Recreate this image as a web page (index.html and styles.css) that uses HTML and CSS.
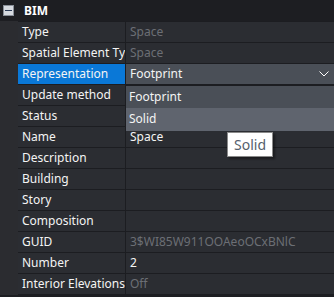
FILE: index.html
```html
<!DOCTYPE html>
<html lang="en">
<head>
    <meta charset="UTF-8">
    <title>Properties</title>
    <link rel="stylesheet" href="styles.css">
</head>
<body>
    <div class="panel">
        <div class="header">
            <span class="toggle"><span class="minus"></span></span>
            <span class="title">BIM</span>
        </div>
        <div class="rows">
            <div class="row"><div class="label">Type</div><div class="value muted">Space</div></div>
            <div class="row"><div class="label">Spatial Element Type</div><div class="value muted">Space</div></div>
            <div class="row selected">
                <div class="label">Representation</div>
                <div class="value select">
                    <span>Footprint</span>
                    <svg class="chevron" width="10" height="6" viewBox="0 0 10 6"><path d="M0.5 0.5 L5 5 L9.5 0.5" fill="none" stroke="#fff" stroke-width="1"/></svg>
                </div>
                <!-- open list of the representation select -->
                <div class="dropdown">
                    <div class="option">Footprint</div>
                    <div class="option hover">Solid</div>
                </div>
                <div class="tooltip">Solid</div>
            </div>
            <div class="row"><div class="label">Update method</div><div class="value"></div></div>
            <div class="row"><div class="label">Status</div><div class="value"></div></div>
            <div class="row"><div class="label">Name</div><div class="value">Space</div></div>
            <div class="row"><div class="label">Description</div><div class="value"></div></div>
            <div class="row"><div class="label">Building</div><div class="value"></div></div>
            <div class="row"><div class="label">Story</div><div class="value"></div></div>
            <div class="row"><div class="label">Composition</div><div class="value"></div></div>
            <div class="row"><div class="label">GUID</div><div class="value muted">3$WI85W911OOAeoOCxBNlC</div></div>
            <div class="row"><div class="label">Number</div><div class="value">2</div></div>
            <div class="row"><div class="label">Interior Elevations</div><div class="value muted">Off</div></div>
        </div>
    </div>
</body>
</html>
```

FILE: styles.css
```css
body {
    margin: 0;
    background-color: #1d1e22;
    font-family: "Noto Sans", "DejaVu Sans", sans-serif;
    font-size: 12px;
    color: #f4f4f4;
}
.panel {
    width: 334px;
    height: 297px;
    overflow: hidden;
}
.header {
    height: 21px;
    display: flex;
    align-items: center;
    background-color: #1d1e22;
}
.toggle {
    width: 9px;
    height: 9px;
    margin-left: 3px;
    margin-right: 10px;
    border: 1px solid #8a9099;
    background-color: #d6dae0;
    display: flex;
    align-items: center;
    justify-content: center;
}
.minus {
    width: 7px;
    height: 1px;
    background-color: #2a3a55;
}
.title {
    font-weight: bold;
    color: #ffffff;
}
.rows {
    padding-left: 18px;
    background-color: #2b2c30;
}
.row {
    position: relative;
    display: flex;
    height: 20px;
    border-top: 1px solid #1c1d21;
    background-color: #2b2d32;
}
.row:last-child {
    border-bottom: 1px solid #1c1d21;
}
.label {
    width: 103px;
    padding-left: 4px;
    border-right: 1px solid #1c1d21;
    line-height: 20px;
    white-space: nowrap;
    overflow: hidden;
}
.value {
    flex: 1;
    padding-left: 4px;
    line-height: 20px;
    white-space: nowrap;
}
.muted {
    color: #6c6f75;
}
.selected .label {
    background-color: #0a78d7;
}
.select {
    display: flex;
    align-items: center;
    justify-content: space-between;
    padding-right: 5px;
    background-color: #4a4f57;
}
.dropdown {
    position: absolute;
    left: 108px;
    top: 21px;
    right: 0;
    border-top: 1px solid #1c1d21;
    background-color: #4a4f57;
    z-index: 2;
}
.option {
    height: 22px;
    line-height: 22px;
    padding-left: 3px;
}
.option.hover {
    height: 23px;
    background-color: #5f646e;
}
.tooltip {
    position: absolute;
    left: 209px;
    top: 68px;
    padding: 2px 6px;
    background-color: #ffffff;
    border: 1px solid #8a8a8a;
    box-shadow: 2px 2px 2px rgba(0, 0, 0, 0.4);
    color: #55606c;
    font-size: 14px;
    line-height: 19px;
    z-index: 3;
}
```
